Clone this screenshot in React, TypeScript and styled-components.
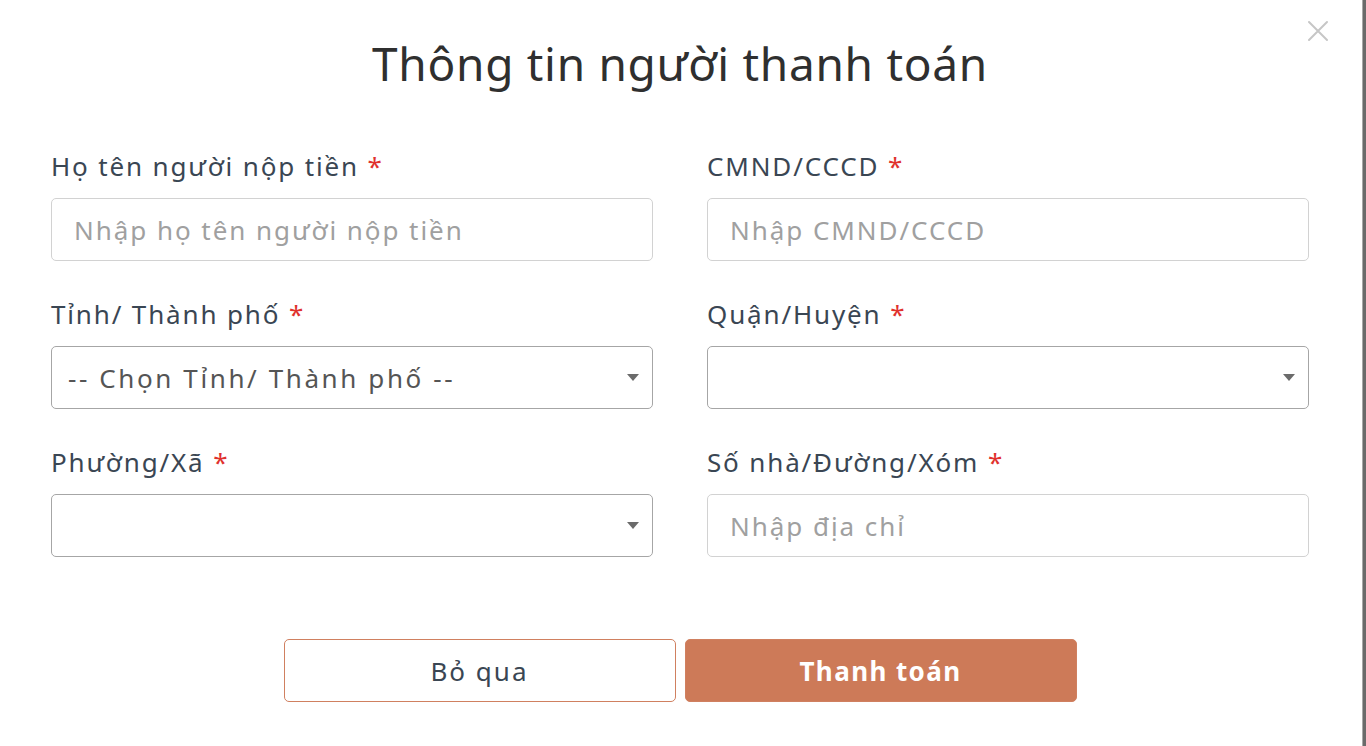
import styled, { createGlobalStyle } from "styled-components"

const GlobalStyle = createGlobalStyle`
  html, body {
    margin: 0;
    padding: 0;
    background: #fff;
  }
  body {
    font-family: "Noto Sans", "Open Sans", sans-serif;
  }
`

interface FieldData {
  label: string,
  kind: 'input' | 'select',
  placeholder?: string,
  value?: string
}

const fields: FieldData[] = [
  { label: 'Họ tên người nộp tiền', kind: 'input', placeholder: 'Nhập họ tên người nộp tiền' },
  { label: 'CMND/CCCD', kind: 'input', placeholder: 'Nhập CMND/CCCD' },
  { label: 'Tỉnh/ Thành phố', kind: 'select', value: '-- Chọn Tỉnh/ Thành phố --' },
  { label: 'Quận/Huyện', kind: 'select' },
  { label: 'Phường/Xã', kind: 'select' },
  { label: 'Số nhà/Đường/Xóm', kind: 'input', placeholder: 'Nhập địa chỉ' },
]

export default function App() {
  return (
    <Page>
      <GlobalStyle />
      <Dialog>
        <CloseButton aria-label="Đóng">
          <svg width="22" height="22" viewBox="0 0 22 22">
            <path d="M2 2 L20 20 M20 2 L2 20" stroke="#c6c6c6" strokeWidth="2" strokeLinecap="round" />
          </svg>
        </CloseButton>
        <Title>Thông tin người thanh toán</Title>
        <FormGrid>
          {fields.map(f => (
            <Field key={f.label}>
              <Label>{f.label} <Required>*</Required></Label>
              {f.kind == 'input' ? (
                <Input type="text" placeholder={f.placeholder} />
              ) : (
                <SelectBox>
                  <SelectValue>{f.value}</SelectValue>
                  <Caret />
                </SelectBox>
              )}
            </Field>
          ))}
        </FormGrid>
        <Actions>
          <Button variant="outline">Bỏ qua</Button>
          <Button variant="solid">Thanh toán</Button>
        </Actions>
      </Dialog>
      <EdgeBar />
    </Page>
  )
}

const Page = styled.div`
  display: flex;
  width: 100%;
  height: 746px;
  overflow: hidden;
`
const Dialog = styled.div`
  position: relative;
  flex: 1;
  padding: 33px 53px 0 51px;
  display: flex;
  flex-direction: column;
`
const EdgeBar = styled.div`
  width: 4px;
  background: linear-gradient(to right, #a8a8a8 0, #a8a8a8 1px, #6a6a6a 1px);
`
const CloseButton = styled.button`
  position: absolute;
  top: 20px;
  right: 33px;
  border: 0;
  padding: 0;
  background: none;
  cursor: pointer;
  line-height: 0;
`
const Title = styled.h1`
  margin: 0;
  text-align: center;
  font-size: 46px;
  line-height: 60px;
  letter-spacing: 0.7px;
  font-weight: 400;
  color: #2f2f2f;
`
const FormGrid = styled.div`
  margin-top: 58px;
  display: grid;
  grid-template-columns: 1fr 1fr;
  column-gap: 54px;
  row-gap: 38px;
`
const Field = styled.div`
  display: flex;
  flex-direction: column;
`
const Label = styled.label`
  font-size: 26px;
  line-height: 30px;
  letter-spacing: 1.85px;
  color: #3a4653;
  margin-bottom: 17px;
`
const Required = styled.span`
  color: #e0312d;
`
const Input = styled.input`
  box-sizing: border-box;
  height: 63px;
  width: 100%;
  border: 1.5px solid #d2d2d2;
  border-radius: 5px;
  padding: 0 22px;
  font-family: inherit;
  font-size: 26px;
  letter-spacing: 1.95px;
  color: #333;
  outline: none;

  &::placeholder {
    color: #a0a0a0;
  }
`
const SelectBox = styled.div`
  box-sizing: border-box;
  height: 63px;
  border: 1.5px solid #a6a6a6;
  border-radius: 5px;
  padding: 0 13px 0 16px;
  display: flex;
  align-items: center;
  justify-content: space-between;
`
const SelectValue = styled.span`
  font-size: 26px;
  letter-spacing: 2.6px;
  color: #555;
`
const Caret = styled.span`
  width: 0;
  height: 0;
  border-left: 6px solid transparent;
  border-right: 6px solid transparent;
  border-top: 7px solid #6b6b6b;
`
const Actions = styled.div`
  margin-top: 82px;
  display: flex;
  justify-content: center;
  gap: 9px;
`
const Button = styled.button<{ variant: 'outline' | 'solid' }>`
  width: 392px;
  height: 63px;
  border-radius: 5px;
  font-family: inherit;
  font-size: 26px;
  cursor: pointer;
  border: 1.5px solid #d08060;
  background: ${p => p.variant == 'solid' ? '#cd7a58' : '#fff'};
  color: ${p => p.variant == 'solid' ? '#fff' : '#3a4653'};
  font-weight: ${p => p.variant == 'solid' ? 700 : 400};
  letter-spacing: ${p => p.variant == 'solid' ? '1.4px' : '2px'};
`
